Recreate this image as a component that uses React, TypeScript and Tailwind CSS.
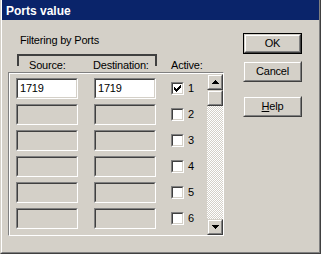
import React from "react";

const rows = ["1719", "", "", "", "", ""];

function Field({ value }: { value: string }) {
  return (
    <div className="w-[62px] h-[21px] border border-t-[#808080] border-l-[#808080] border-b-white border-r-white">
      <div
        className={`h-full flex items-center pl-[2px] border border-t-[#404040] border-l-[#404040] border-b-[#d4d0c8] border-r-[#d4d0c8] ${
          value ? "bg-white" : "bg-[#d4d0c8]"
        }`}
      >
        {value}
      </div>
    </div>
  );
}

function CheckBox({ checked }: { checked: boolean }) {
  return (
    <div className="w-[13px] h-[13px] border border-t-[#808080] border-l-[#808080] border-b-white border-r-white">
      <div className="h-full flex items-center justify-center bg-white border border-t-[#404040] border-l-[#404040] border-b-[#d4d0c8] border-r-[#d4d0c8]">
        {checked && (
          <svg width="7" height="7" viewBox="0 0 7 7" shapeRendering="crispEdges">
            <path
              d="M0 2h1v3h-1z M1 3h1v3h-1z M2 4h1v3h-1z M3 3h1v3h-1z M4 2h1v3h-1z M5 1h1v3h-1z M6 0h1v3h-1z"
              fill="#000"
            />
          </svg>
        )}
      </div>
    </div>
  );
}

function Raised({ children, className = "" }: { children?: React.ReactNode; className?: string }) {
  return (
    <div className={`border border-t-[#d4d0c8] border-l-[#d4d0c8] border-b-[#404040] border-r-[#404040] ${className}`}>
      <div className="h-full flex items-center justify-center bg-[#d4d0c8] border border-t-white border-l-white border-b-[#808080] border-r-[#808080]">
        {children}
      </div>
    </div>
  );
}

function Arrow({ up }: { up?: boolean }) {
  return (
    <svg width="7" height="4" viewBox="0 0 7 4" shapeRendering="crispEdges">
      <path
        d={
          up
            ? "M3 0h1v1h-1z M2 1h3v1h-3z M1 2h5v1h-5z M0 3h7v1h-7z"
            : "M0 0h7v1h-7z M1 1h5v1h-5z M2 2h3v1h-3z M3 3h1v1h-1z"
        }
        fill="#000"
      />
    </svg>
  );
}

function DialogButton({ label, isDefault }: { label: React.ReactNode; isDefault?: boolean }) {
  if (isDefault) {
    return (
      <div className="w-[59px] h-[21px] border border-black">
        <Raised className="h-full">{label}</Raised>
      </div>
    );
  }
  return <Raised className="w-[59px] h-[21px]">{label}</Raised>;
}

export default function App() {
  return (
    <div className="w-[321px] h-[254px] bg-[#d4d0c8] text-black text-[11px] tracking-[-0.2px] font-['Liberation_Sans',Arial,sans-serif] border-l border-l-[#d4d0c8] border-r border-b border-r-[#404040] border-b-[#404040]">
      <div className="h-full border-l border-l-white border-r border-b border-r-[#808080] border-b-[#808080]">
        {/* Title bar */}
        <div className="h-[20px] bg-[#0a246a] flex items-center pl-[4px] pt-[1px] text-white text-[12px] font-bold tracking-normal">
          Ports value
        </div>

        <div className="flex">
          {/* Left side */}
          <div className="ml-[6px] w-[216px] pt-[14px]">
            <div className="pl-[12px] leading-[13px]">Filtering by Ports</div>

            <div className="mt-[7px] h-[18px] flex">
              <div className="ml-[9px] w-[140px] h-[18px] border-t-2 border-[#404040] flex leading-[13px]">
                <div className="w-[2px] h-[10px] bg-[#404040]" />
                <div className="flex-1 flex pl-[10px] pt-[2.5px]">
                  <span className="w-[64px]">Source:</span>
                  <span>Destination:</span>
                </div>
                <div className="w-[2px] h-[10px] bg-[#404040]" />
              </div>
              <div className="ml-[14px] pt-[4.5px] leading-[13px]">Active:</div>
            </div>

            {/* Filter table */}
            <div className="h-[164px] border-t border-l border-t-[#808080] border-l-[#808080] border-b border-r border-b-white border-r-white">
              <div className="h-full flex border-t border-l border-white">
                <div className="flex-1 flex flex-col gap-[5px] pt-[4px] pl-[6px]">
                  {rows.map((v, i) => (
                    <div key={i} className="h-[21px] flex items-center">
                      <Field value={v} />
                      <div className="ml-[16px]">
                        <Field value={v} />
                      </div>
                      <div className="ml-[15px]">
                        <CheckBox checked={i === 0} />
                      </div>
                      <span className="ml-[4px]">{i + 1}</span>
                    </div>
                  ))}
                </div>
                <div className="w-[16px] h-full flex flex-col">
                  <Raised className="h-[16px]">
                    <Arrow up />
                  </Raised>
                  <Raised className="h-[16px]" />
                  <div className="flex-1 bg-[image:repeating-conic-gradient(#ffffff_0%_25%,#d4d0c8_0%_50%)] bg-[length:2px_2px]" />
                  <Raised className="h-[16px]">
                    <Arrow />
                  </Raised>
                </div>
              </div>
            </div>
          </div>

          {/* Buttons */}
          <div className="ml-[19px] pt-[13px] flex flex-col">
            <DialogButton label="OK" isDefault />
            <div className="mt-[7px]">
              <DialogButton label="Cancel" />
            </div>
            <div className="mt-[14px]">
              <DialogButton
                label={
                  <span>
                    <span className="underline">H</span>elp
                  </span>
                }
              />
            </div>
          </div>
        </div>
      </div>
    </div>
  );
}
